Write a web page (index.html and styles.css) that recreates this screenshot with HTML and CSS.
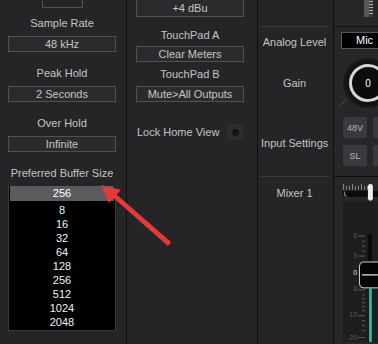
FILE: index.html
```html
<!DOCTYPE html>
<html lang="en">

<head>
  <meta charset="UTF-8">
  <meta name="viewport" content="width=device-width, initial-scale=1.0">
  <title>Device Settings</title>

  <link rel="stylesheet" href="styles.css">
</head>

<body>
  <div class="main-wrapper">
    <div class="col col-settings">
      <div class="stub"></div>
      <div class="field">
        <div class="label">Sample Rate</div>
        <div class="box">48 kHz</div>
      </div>
      <div class="field">
        <div class="label">Peak Hold</div>
        <div class="box">2 Seconds</div>
      </div>
      <div class="field">
        <div class="label">Over Hold</div>
        <div class="box">Infinite</div>
      </div>
      <div class="field">
        <div class="label">Preferred Buffer Size</div>
        <div class="combo">
          <div class="combo-current">256</div>
          <ul class="combo-list">
            <li>8</li>
            <li>16</li>
            <li>32</li>
            <li>64</li>
            <li>128</li>
            <li>256</li>
            <li>512</li>
            <li>1024</li>
            <li>2048</li>
          </ul>
        </div>
      </div>
    </div>

    <div class="col col-touch">
      <div class="box box-top">+4 dBu</div>
      <div class="label label-a">TouchPad A</div>
      <div class="box box-a">Clear Meters</div>
      <div class="label label-b">TouchPad B</div>
      <div class="box box-b">Mute&gt;All Outputs</div>
      <div class="lock-row">
        <span>Lock Home View</span>
        <button type="button" class="toggle"><span class="dot"></span></button>
      </div>
    </div>

    <div class="col col-names">
      <div class="rule rule-top"></div>
      <div class="label name-analog">Analog Level</div>
      <div class="label name-gain">Gain</div>
      <div class="label name-input">Input Settings</div>
      <div class="rule rule-mid"></div>
      <div class="label name-mixer">Mixer 1</div>
    </div>

    <div class="col col-channel">
      <div class="channel-top">
        <svg class="mini-meter" width="9" height="17" viewBox="0 0 9 17">
          <rect x="0" y="0" width="5" height="17" fill="#58585c"/>
          <rect x="5" y="0" width="4" height="17" fill="#3a3a3e"/>
          <g stroke="#aaa" stroke-width="1">
            <line x1="5" y1="1.5" x2="9" y2="1.5"/>
            <line x1="5" y1="4.5" x2="9" y2="4.5"/>
            <line x1="5" y1="7.5" x2="9" y2="7.5"/>
            <line x1="5" y1="10.5" x2="9" y2="10.5"/>
            <line x1="5" y1="13.5" x2="9" y2="13.5"/>
          </g>
        </svg>
      </div>
      <div class="mic-box">Mic</div>
      <div class="knob">
        <div class="knob-ring">0</div>
      </div>
      <div class="input-btns">
        <button type="button" class="in-btn">48V</button>
        <button type="button" class="in-btn"></button>
        <button type="button" class="in-btn">SL</button>
        <button type="button" class="in-btn"></button>
      </div>
      <svg class="fader" width="44" height="166" viewBox="0 0 44 166">
        <g stroke="#8a8a8e" stroke-width="1">
          <line x1="9.5" y1="7" x2="9.5" y2="13"/>
          <line x1="12.5" y1="9" x2="12.5" y2="13"/>
          <line x1="15.5" y1="9" x2="15.5" y2="13"/>
          <line x1="18.5" y1="7" x2="18.5" y2="13"/>
          <line x1="21.5" y1="9" x2="21.5" y2="13"/>
          <line x1="24.5" y1="9" x2="24.5" y2="13"/>
          <line x1="27.5" y1="7" x2="27.5" y2="13"/>
          <line x1="30.5" y1="9" x2="30.5" y2="13"/>
          <line x1="33.5" y1="9" x2="33.5" y2="13"/>
        </g>
        <rect x="9" y="14" width="35" height="6" fill="#0b0b0c"/>
        <path d="M10.5 14.5 V19 H13" stroke="#8a8a8e" fill="none"/>
        <rect x="34" y="7" width="5" height="17" rx="2.5" fill="#ececec"/>
        <text x="36" y="39" class="fader-val">0</text>
        <rect x="9" y="25" width="35" height="141" fill="#1e1e21"/>
        <g class="scale">
          <text x="23" y="61">6</text>
          <text x="23" y="81">3</text>
          <text x="23" y="99" class="scale-zero">0</text>
          <text x="23" y="115">3</text>
          <text x="23" y="141">10</text>
          <text x="23" y="164">20</text>
        </g>
        <g stroke="#5c5c60" stroke-width="1">
          <line x1="24" y1="59.5" x2="31" y2="59.5"/>
          <line x1="28" y1="64.5" x2="31" y2="64.5"/>
          <line x1="28" y1="69.5" x2="31" y2="69.5"/>
          <line x1="28" y1="74.5" x2="31" y2="74.5"/>
          <line x1="24" y1="79.5" x2="31" y2="79.5"/>
          <line x1="24" y1="113.5" x2="31" y2="113.5"/>
          <line x1="28" y1="118.5" x2="31" y2="118.5"/>
          <line x1="28" y1="122.5" x2="31" y2="122.5"/>
          <line x1="28" y1="126.5" x2="31" y2="126.5"/>
          <line x1="28" y1="130.5" x2="31" y2="130.5"/>
          <line x1="28" y1="134.5" x2="31" y2="134.5"/>
          <line x1="24" y1="139.5" x2="31" y2="139.5"/>
          <line x1="28" y1="144.5" x2="31" y2="144.5"/>
          <line x1="28" y1="149.5" x2="31" y2="149.5"/>
          <line x1="28" y1="154.5" x2="31" y2="154.5"/>
          <line x1="24" y1="161.5" x2="31" y2="161.5"/>
        </g>
        <rect x="34" y="58" width="4" height="108" fill="#0a0a0b"/>
        <rect x="35" y="112" width="3" height="54" fill="#2fb49b"/>
        <rect x="25.5" y="85.5" width="24" height="26" rx="4" fill="#050505" stroke="#d0d0d0"/>
        <line x1="28" y1="98.5" x2="44" y2="98.5" stroke="#f4f4f4" stroke-width="1.2"/>
      </svg>
    </div>
  </div>

  <svg class="arrow" width="378" height="344" viewBox="0 0 378 344">
    <path d="M101 185 L121 190 L116.5 194.5 L171 242 L168 246 L113.5 198 L109 203 Z" fill="#e5393b"/>
  </svg>
</body>

</html>
```

FILE: styles.css
```css
* {
  box-sizing: border-box;
}

body {
  margin: 0;
  background: #252528;
  font-family: "Liberation Sans", Arial, sans-serif;
  font-size: 11px;
  color: #c4c4c4;
  overflow: hidden;
}

.main-wrapper {
  display: flex;
  height: 344px;
}

.col {
  display: flex;
  flex-direction: column;
  border-right: 1px solid #0e0e0f;
  flex-shrink: 0;
}

.label {
  line-height: 16px;
  text-align: center;
  white-space: nowrap;
}

.box {
  height: 16px;
  line-height: 14px;
  border: 1px solid #505055;
  background: #2b2b2e;
  text-align: center;
  color: #c6c6c6;
  white-space: nowrap;
}

/* left column */
.col-settings {
  width: 127px;
  padding: 0 10px 0 8px;
}

.stub {
  width: 41px;
  height: 9px;
  margin: 0 auto 7px;
  border: 1px solid #505055;
  border-top: 0;
}

.field {
  margin-bottom: 13px;
}

.field .box {
  margin-top: 5px;
}

.combo {
  margin-top: 5px;
  border: 1px solid #3a3a3d;
  border-top: 0;
  background: #000;
}

.combo-current {
  height: 15px;
  line-height: 15px;
  margin: 0 1px 0 1px;
  background: #5b5b5f;
  color: #fff;
  text-align: center;
}

.combo-list {
  list-style: none;
  margin: 0;
  padding: 2px 0 1px;
}

.combo-list li {
  line-height: 14px;
  text-align: center;
  color: #f2f2f2;
}

/* touchpad column */
.col-touch {
  width: 131px;
  padding: 0 13px 0 9px;
}

.box-top {
  height: 18px;
  margin-top: -1px;
  line-height: 16px;
}

.label-a {
  margin-top: 10px;
}

.box-a {
  margin-top: 3px;
}

.label-b {
  margin-top: 4px;
}

.box-b {
  margin-top: 4px;
}

.lock-row {
  display: flex;
  align-items: center;
  justify-content: space-between;
  margin-top: 22px;
  padding-left: 1px;
  line-height: 16px;
}

.toggle {
  width: 16px;
  height: 16px;
  margin-right: 1px;
  padding: 0;
  border: 0;
  background: #2e2e32;
  display: flex;
  align-items: center;
  justify-content: center;
}

.toggle .dot {
  width: 7px;
  height: 7px;
  border-radius: 50%;
  background: #141415;
}

/* channel names column */
.col-names {
  width: 76px;
  padding: 0 5px 0 3px;
}

.rule {
  height: 1px;
  background: #3c3c40;
}

.rule-top {
  margin-top: 26px;
}

.name-analog {
  margin-top: 7px;
}

.name-gain {
  margin-top: 25px;
}

.name-input {
  margin-top: 44px;
}

.rule-mid {
  margin-top: 25px;
}

.name-mixer {
  margin-top: 8px;
}

/* channel strip */
.col-channel {
  flex: 1;
  border-right: 0;
  overflow: hidden;
  background: #27272a;
}

.channel-top {
  height: 27px;
  border-bottom: 1px solid #0e0e0f;
  padding-left: 30px;
}

.mini-meter {
  display: block;
}

.mic-box {
  width: 45px;
  height: 17px;
  margin: 5px 0 0 7px;
  border: 1px solid #58585c;
  border-right: 0;
  background: #000;
  color: #fff;
  line-height: 15px;
  padding-left: 14px;
  font-size: 11px;
}

.knob {
  position: relative;
  width: 50px;
  height: 50px;
  margin: 9px 0 0 9px;
  border-radius: 50%;
  background: radial-gradient(circle, #111 55%, #1a1a1c 72%, #2a2a2d 100%);
  display: flex;
  align-items: center;
  justify-content: center;
}

.knob::before {
  content: "";
  position: absolute;
  left: -4px;
  top: 44px;
  width: 8px;
  height: 1px;
  background: #4a4a4e;
  transform: rotate(-45deg);
}

.knob-ring {
  width: 38px;
  height: 38px;
  border-radius: 50%;
  border: 3px solid #d6d6d6;
  background: #0c0c0c;
  color: #fff;
  font-size: 10px;
  display: flex;
  align-items: center;
  justify-content: center;
}

.input-btns {
  display: grid;
  grid-template-columns: 24px 24px;
  column-gap: 6px;
  row-gap: 7px;
  margin: 9px 0 0 9px;
}

.in-btn {
  height: 21px;
  padding: 0;
  border: 0;
  border-radius: 2px;
  background: #3a3a3e;
  color: #b4b4b8;
  font-family: "Liberation Sans", Arial, sans-serif;
  font-size: 9px;
}

.fader {
  display: block;
  margin-top: 10px;
  border-top: 1px solid #0e0e0f;
}

.fader-val {
  fill: #d8e4f4;
  font-size: 10px;
  text-anchor: middle;
  font-family: "Liberation Sans", Arial, sans-serif;
}

.scale text {
  fill: #5c5c60;
  font-size: 7px;
  text-anchor: end;
  font-family: "Liberation Sans", Arial, sans-serif;
}

.scale .scale-zero {
  fill: #e0e0e0;
}

.arrow {
  position: absolute;
  left: 0;
  top: 0;
  pointer-events: none;
}
```
